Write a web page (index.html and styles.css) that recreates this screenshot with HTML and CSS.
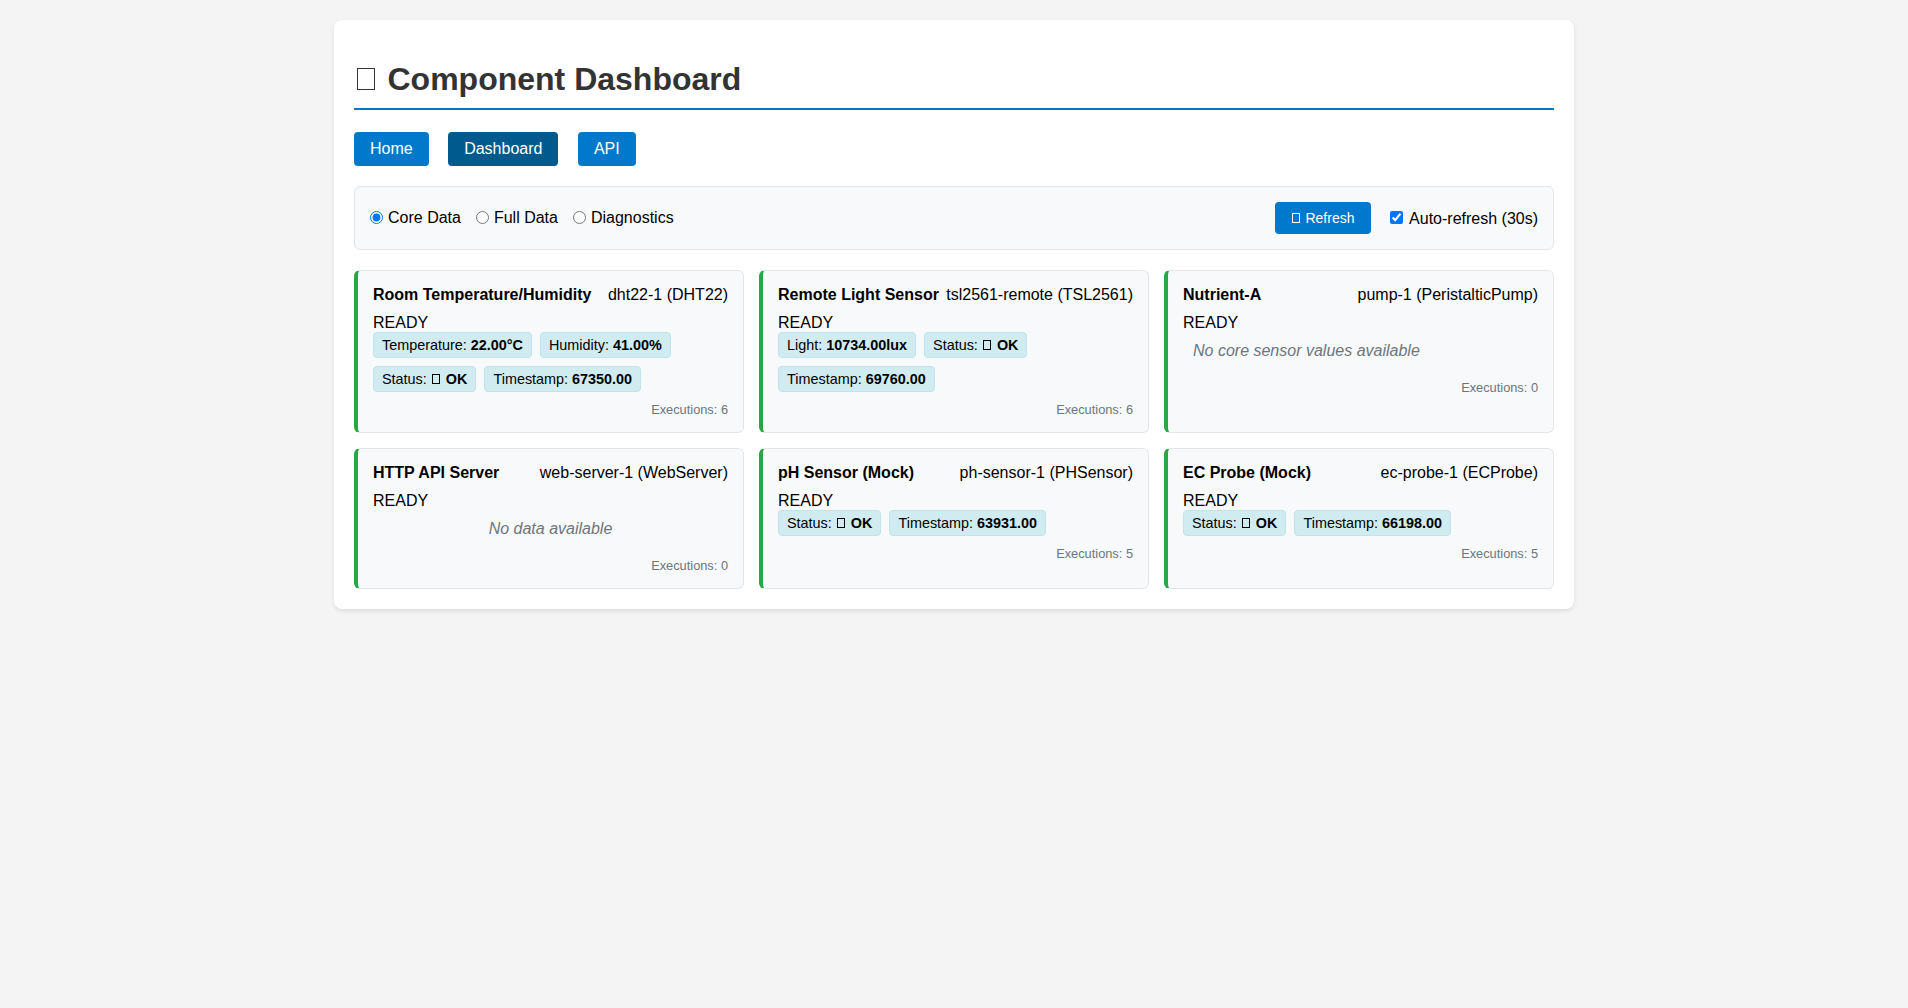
FILE: index.html
```html
<!DOCTYPE html>
<html lang="en">
<head>
<meta charset="utf-8">
<title>Component Dashboard</title>
<link rel="stylesheet" href="styles.css">
</head>
<body>
<div class="container">
  <h1><span class="tofu" aria-hidden="true"></span> Component Dashboard</h1>
  <nav class="nav">
    <a href="#">Home</a>
    <a href="#" class="active">Dashboard</a>
    <a href="#">API</a>
  </nav>
  <div class="controls">
    <div class="view-options">
      <label class="opt"><input type="radio" name="view" checked>Core Data</label>
      <label class="opt"><input type="radio" name="view">Full Data</label>
      <label class="opt"><input type="radio" name="view">Diagnostics</label>
    </div>
    <div class="actions">
      <button class="refresh"><span class="tofu" aria-hidden="true"></span> Refresh</button>
      <label class="auto"><input type="checkbox" checked> Auto-refresh (30s)</label>
    </div>
  </div>
  <div class="grid">
    <div class="card">
      <div class="card-header"><span class="name">Room Temperature/Humidity</span><span class="cid">dht22-1 (DHT22)</span></div>
      <div class="state">READY</div>
      <div class="metrics">
        <span class="metric">Temperature: <b>22.00°C</b></span>
        <span class="metric">Humidity: <b>41.00%</b></span>
        <span class="metric">Status: <b><span class="tofu"></span> OK</b></span>
        <span class="metric">Timestamp: <b>67350.00</b></span>
      </div>
      <div class="exec">Executions: 6</div>
    </div>
    <div class="card">
      <div class="card-header"><span class="name">Remote Light Sensor</span><span class="cid">tsl2561-remote (TSL2561)</span></div>
      <div class="state">READY</div>
      <div class="metrics">
        <span class="metric">Light: <b>10734.00lux</b></span>
        <span class="metric">Status: <b><span class="tofu"></span> OK</b></span>
        <span class="metric">Timestamp: <b>69760.00</b></span>
      </div>
      <div class="exec">Executions: 6</div>
    </div>
    <div class="card">
      <div class="card-header"><span class="name">Nutrient-A</span><span class="cid">pump-1 (PeristalticPump)</span></div>
      <div class="state">READY</div>
      <div class="empty">No core sensor values available</div>
      <div class="exec">Executions: 0</div>
    </div>
    <div class="card">
      <div class="card-header"><span class="name">HTTP API Server</span><span class="cid">web-server-1 (WebServer)</span></div>
      <div class="state">READY</div>
      <div class="empty center">No data available</div>
      <div class="exec">Executions: 0</div>
    </div>
    <div class="card">
      <div class="card-header"><span class="name">pH Sensor (Mock)</span><span class="cid">ph-sensor-1 (PHSensor)</span></div>
      <div class="state">READY</div>
      <div class="metrics">
        <span class="metric">Status: <b><span class="tofu"></span> OK</b></span>
        <span class="metric">Timestamp: <b>63931.00</b></span>
      </div>
      <div class="exec">Executions: 5</div>
    </div>
    <div class="card">
      <div class="card-header"><span class="name">EC Probe (Mock)</span><span class="cid">ec-probe-1 (ECProbe)</span></div>
      <div class="state">READY</div>
      <div class="metrics">
        <span class="metric">Status: <b><span class="tofu"></span> OK</b></span>
        <span class="metric">Timestamp: <b>66198.00</b></span>
      </div>
      <div class="exec">Executions: 5</div>
    </div>
  </div>
</div>
</body>
</html>
```

FILE: styles.css
```css
body {
  margin: 0;
  padding: 20px;
  background: #f4f4f4;
  font-family: "Liberation Sans", Arial, sans-serif;
  font-size: 16px;
  color: #000;
}

.container {
  max-width: 1200px;
  margin: 0 auto;
  padding: 20px;
  background: #fff;
  border-radius: 8px;
  box-shadow: 0 2px 4px rgba(0, 0, 0, 0.1);
}

/* missing-glyph box, as the emoji renders without an emoji font */
.tofu {
  display: inline-block;
  box-sizing: border-box;
  width: 0.57em;
  height: 0.69em;
  margin: 0 0.12em 0 0.08em;
  border: max(1px, 0.055em) solid currentColor;
  font-weight: normal;
}

h1 {
  font-size: 32px;
  margin: 21.44px 0;
  padding-bottom: 10px;
  color: #333;
  border-bottom: 2px solid #0078cc;
}

.nav {
  margin-bottom: 20px;
}

.nav a {
  display: inline-block;
  padding: 8px 16px;
  margin-right: 15px;
  background: #0078cc;
  color: #fff;
  text-decoration: none;
  border-radius: 4px;
}

.nav a.active {
  background: #005a8e;
}

.controls {
  display: flex;
  justify-content: space-between;
  align-items: center;
  padding: 15px;
  margin-bottom: 20px;
  background: #f8f9fa;
  border: 1px solid #e3e6e9;
  border-radius: 6px;
}

.view-options {
  display: flex;
  align-items: center;
  gap: 15px;
}

.opt {
  display: inline-flex;
  align-items: center;
  gap: 5px;
}

.opt input {
  margin: 0;
}

.actions {
  display: flex;
  align-items: center;
  gap: 15px;
}

.refresh {
  font-family: inherit;
  font-size: 14px;
  padding: 8px 16px;
  border: none;
  border-radius: 4px;
  background: #0078cc;
  color: #fff;
}

.grid {
  display: grid;
  grid-template-columns: repeat(3, 1fr);
  gap: 15px;
}

.card {
  background: #f8f9fa;
  border: 1px solid #e3e6e9;
  border-left: 4px solid #28a745;
  border-radius: 6px;
  padding: 15px;
}

.card-header {
  display: flex;
  justify-content: space-between;
  white-space: nowrap;
  margin-bottom: 10px;
}

.name {
  font-weight: bold;
}

.metrics {
  display: flex;
  flex-wrap: wrap;
  gap: 8px;
}

.metric {
  font-size: 0.9em;
  padding: 4px 8px;
  background: #d1ecf1;
  border: 1px solid #bee5eb;
  border-radius: 4px;
}

.exec {
  margin-top: 10px;
  font-size: 0.8em;
  color: #6c757d;
  text-align: right;
}

.empty {
  padding: 10px;
  font-style: italic;
  color: #6c757d;
}

.empty.center {
  text-align: center;
}
```
